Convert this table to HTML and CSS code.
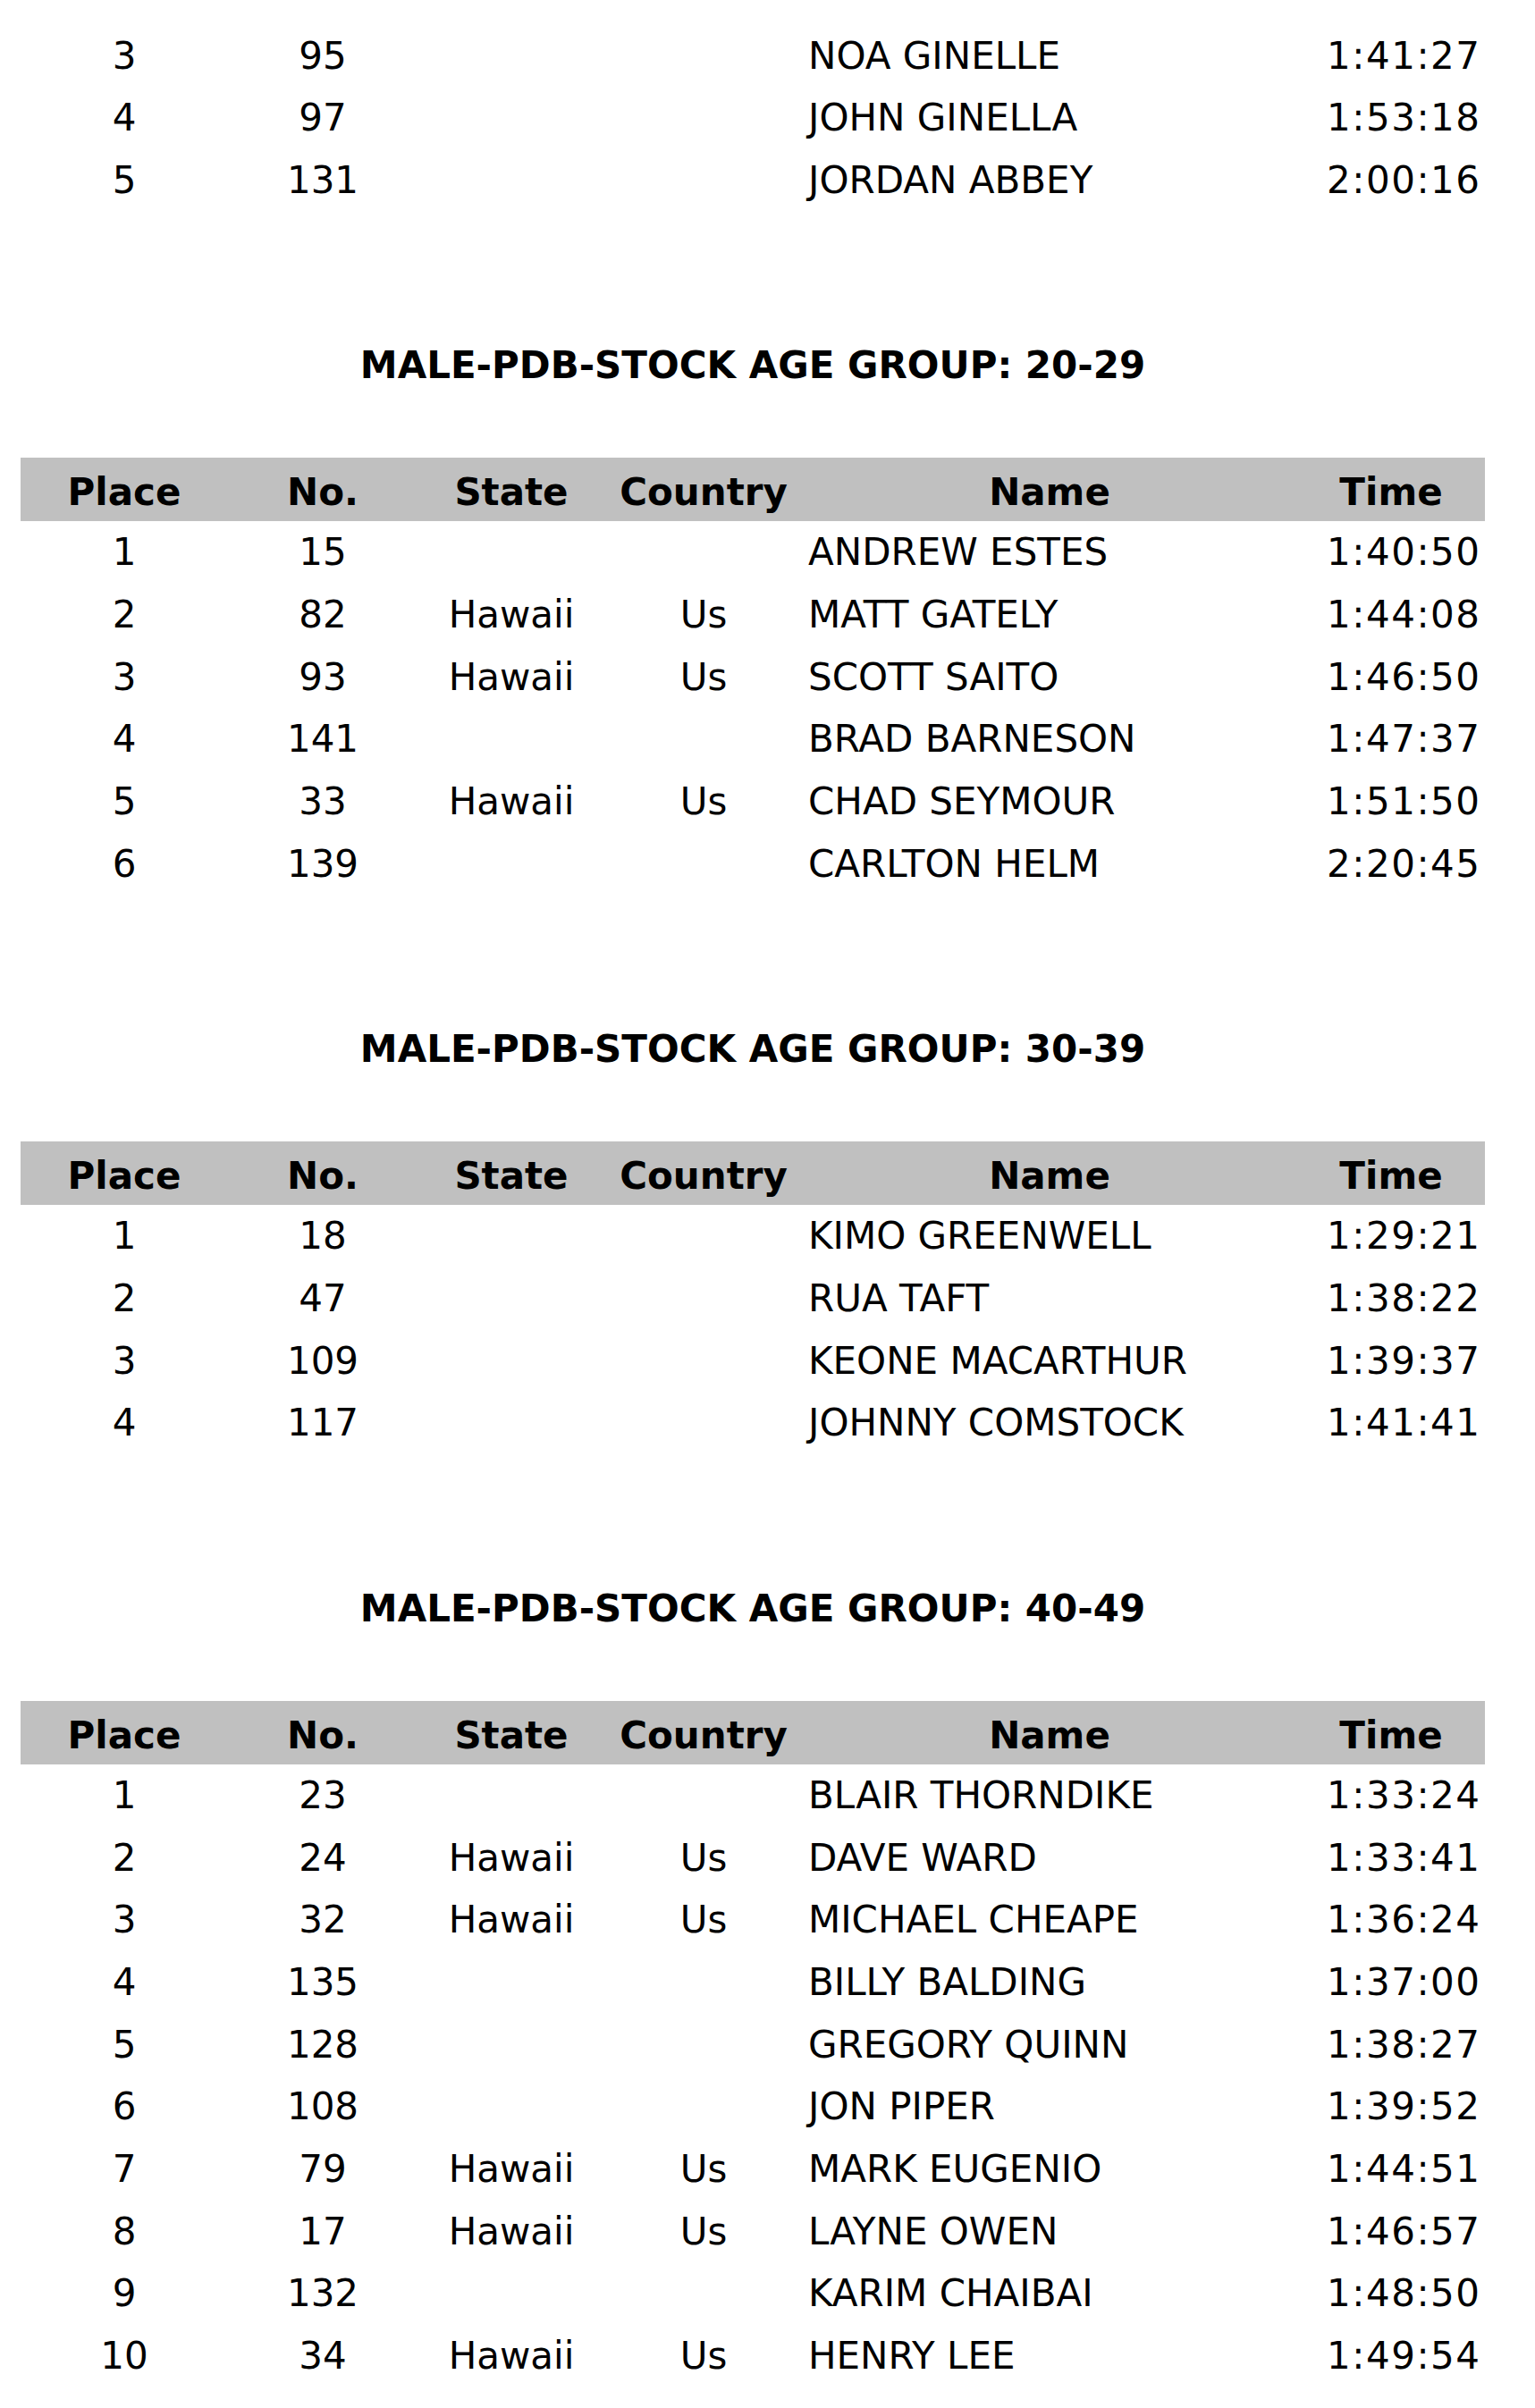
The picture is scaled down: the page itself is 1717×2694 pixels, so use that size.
FILE: index.html
```html
<!DOCTYPE html>
<html>
<head>
<meta charset="utf-8">
<title>Results</title>
<link rel="stylesheet" href="styles.css">
</head>
<body>
<div class="page">
  <table class="results">
    <colgroup><col class="w-place"><col class="w-no"><col class="w-state"><col class="w-country"><col class="w-name"><col class="w-time"></colgroup>
    <tbody>
      <tr><td class="c">3</td><td class="c">95</td><td class="c"></td><td class="c"></td><td class="l">NOA GINELLE</td><td class="r">1:41:27</td></tr>
      <tr><td class="c">4</td><td class="c">97</td><td class="c"></td><td class="c"></td><td class="l">JOHN GINELLA</td><td class="r">1:53:18</td></tr>
      <tr><td class="c">5</td><td class="c">131</td><td class="c"></td><td class="c"></td><td class="l">JORDAN ABBEY</td><td class="r">2:00:16</td></tr>
    </tbody>
  </table>

  <section class="group">
    <h2 class="title">MALE-PDB-STOCK AGE GROUP: 20-29</h2>
    <table class="results">
      <colgroup><col class="w-place"><col class="w-no"><col class="w-state"><col class="w-country"><col class="w-name"><col class="w-time"></colgroup>
      <thead><tr><th>Place</th><th>No.</th><th>State</th><th>Country</th><th>Name</th><th>Time</th></tr></thead>
      <tbody>
        <tr><td class="c">1</td><td class="c">15</td><td class="c"></td><td class="c"></td><td class="l">ANDREW ESTES</td><td class="r">1:40:50</td></tr>
        <tr><td class="c">2</td><td class="c">82</td><td class="c">Hawaii</td><td class="c">Us</td><td class="l">MATT GATELY</td><td class="r">1:44:08</td></tr>
        <tr><td class="c">3</td><td class="c">93</td><td class="c">Hawaii</td><td class="c">Us</td><td class="l">SCOTT SAITO</td><td class="r">1:46:50</td></tr>
        <tr><td class="c">4</td><td class="c">141</td><td class="c"></td><td class="c"></td><td class="l">BRAD BARNESON</td><td class="r">1:47:37</td></tr>
        <tr><td class="c">5</td><td class="c">33</td><td class="c">Hawaii</td><td class="c">Us</td><td class="l">CHAD SEYMOUR</td><td class="r">1:51:50</td></tr>
        <tr><td class="c">6</td><td class="c">139</td><td class="c"></td><td class="c"></td><td class="l">CARLTON HELM</td><td class="r">2:20:45</td></tr>
      </tbody>
    </table>
  </section>

  <section class="group">
    <h2 class="title">MALE-PDB-STOCK AGE GROUP: 30-39</h2>
    <table class="results">
      <colgroup><col class="w-place"><col class="w-no"><col class="w-state"><col class="w-country"><col class="w-name"><col class="w-time"></colgroup>
      <thead><tr><th>Place</th><th>No.</th><th>State</th><th>Country</th><th>Name</th><th>Time</th></tr></thead>
      <tbody>
        <tr><td class="c">1</td><td class="c">18</td><td class="c"></td><td class="c"></td><td class="l">KIMO GREENWELL</td><td class="r">1:29:21</td></tr>
        <tr><td class="c">2</td><td class="c">47</td><td class="c"></td><td class="c"></td><td class="l">RUA TAFT</td><td class="r">1:38:22</td></tr>
        <tr><td class="c">3</td><td class="c">109</td><td class="c"></td><td class="c"></td><td class="l">KEONE MACARTHUR</td><td class="r">1:39:37</td></tr>
        <tr><td class="c">4</td><td class="c">117</td><td class="c"></td><td class="c"></td><td class="l">JOHNNY COMSTOCK</td><td class="r">1:41:41</td></tr>
      </tbody>
    </table>
  </section>

  <section class="group">
    <h2 class="title">MALE-PDB-STOCK AGE GROUP: 40-49</h2>
    <table class="results">
      <colgroup><col class="w-place"><col class="w-no"><col class="w-state"><col class="w-country"><col class="w-name"><col class="w-time"></colgroup>
      <thead><tr><th>Place</th><th>No.</th><th>State</th><th>Country</th><th>Name</th><th>Time</th></tr></thead>
      <tbody>
        <tr><td class="c">1</td><td class="c">23</td><td class="c"></td><td class="c"></td><td class="l">BLAIR THORNDIKE</td><td class="r">1:33:24</td></tr>
        <tr><td class="c">2</td><td class="c">24</td><td class="c">Hawaii</td><td class="c">Us</td><td class="l">DAVE WARD</td><td class="r">1:33:41</td></tr>
        <tr><td class="c">3</td><td class="c">32</td><td class="c">Hawaii</td><td class="c">Us</td><td class="l">MICHAEL CHEAPE</td><td class="r">1:36:24</td></tr>
        <tr><td class="c">4</td><td class="c">135</td><td class="c"></td><td class="c"></td><td class="l">BILLY BALDING</td><td class="r">1:37:00</td></tr>
        <tr><td class="c">5</td><td class="c">128</td><td class="c"></td><td class="c"></td><td class="l">GREGORY QUINN</td><td class="r">1:38:27</td></tr>
        <tr><td class="c">6</td><td class="c">108</td><td class="c"></td><td class="c"></td><td class="l">JON PIPER</td><td class="r">1:39:52</td></tr>
        <tr><td class="c">7</td><td class="c">79</td><td class="c">Hawaii</td><td class="c">Us</td><td class="l">MARK EUGENIO</td><td class="r">1:44:51</td></tr>
        <tr><td class="c">8</td><td class="c">17</td><td class="c">Hawaii</td><td class="c">Us</td><td class="l">LAYNE OWEN</td><td class="r">1:46:57</td></tr>
        <tr><td class="c">9</td><td class="c">132</td><td class="c"></td><td class="c"></td><td class="l">KARIM CHAIBAI</td><td class="r">1:48:50</td></tr>
        <tr><td class="c">10</td><td class="c">34</td><td class="c">Hawaii</td><td class="c">Us</td><td class="l">HENRY LEE</td><td class="r">1:49:54</td></tr>
      </tbody>
    </table>
  </section>
</div>
</body>
</html>
```

FILE: styles.css
```css
html, body {
  margin: 0;
  padding: 0;
  background: #ffffff;
}

body {
  font-family: "DejaVu Sans", Verdana, sans-serif;
  color: #000000;
}

.page {
  width: 1638px;
  padding: 27.5px 0 0 23px;
}

.results {
  width: 1638px;
  border-collapse: collapse;
  border-spacing: 0;
  table-layout: fixed;
  font-size: 42px;
}

.w-place { width: 232px; }
.w-no { width: 212px; }
.w-state { width: 210px; }
.w-country { width: 220px; }
.w-name { width: 554px; }
.w-time { width: 210px; }

.results td {
  padding: 0;
  height: 69.65px;
  line-height: 69.65px;
  white-space: nowrap;
  font-weight: normal;
}

.results th {
  background: #c0c0c0;
  font-weight: bold;
  text-align: center;
  padding: 6px 0 0 0;
  height: 65px;
  line-height: 65px;
  white-space: nowrap;
}

.c { text-align: center; }
.l { text-align: left; padding-left: 7px !important; }
.r { text-align: right; letter-spacing: 1.5px; padding-right: 4.5px !important; }

.group {
  padding-top: 148px;
}

.title {
  margin: 0 0 78px 0;
  font-size: 42px;
  font-weight: bold;
  line-height: 50px;
  text-align: center;
}
```
